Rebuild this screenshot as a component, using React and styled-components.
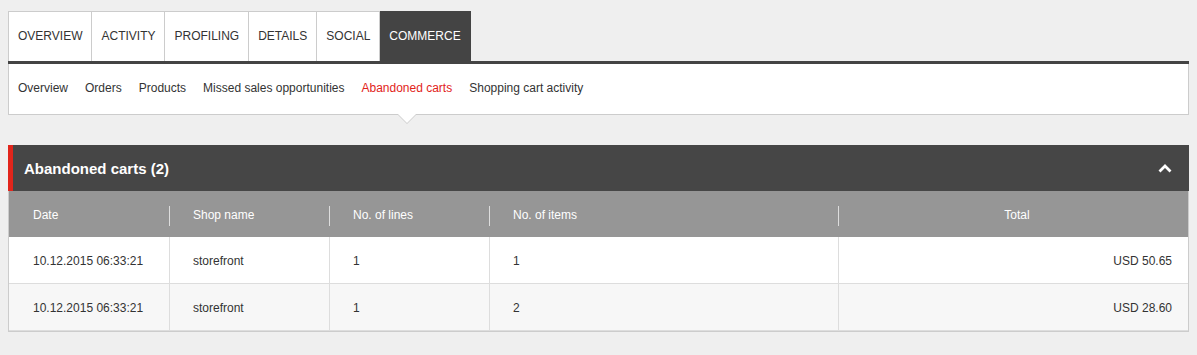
import React from "react";
import styled, { createGlobalStyle } from "styled-components";

const Global = createGlobalStyle`
  html, body { margin: 0; padding: 0; background: #efefef; }
  body { font-family: "Liberation Sans", Arial, sans-serif; font-size: 12px; color: #333; }
  * { box-sizing: border-box; }
`;

const Page = styled.div`
  padding: 11px 8px;
`;

const TabBar = styled.div`
  display: flex;
  border-bottom: 3px solid #444;
`;

const Tab = styled.div`
  height: 50px;
  display: flex;
  align-items: center;
  padding: 0 9px 1px;
  font-size: 12px;
  text-transform: uppercase;
  background: ${(p) => (p.$active ? "#444" : "#fff")};
  color: ${(p) => (p.$active ? "#fff" : "#333")};
  border-top: 1px solid ${(p) => (p.$active ? "#444" : "#ccc")};
  border-right: 1px solid ${(p) => (p.$active ? "#444" : "#ccc")};
  &:first-child { border-left: 1px solid #ccc; }
`;

const SubNav = styled.div`
  display: flex;
  gap: 17px;
  height: 51px;
  padding: 0 9px;
  background: #fff;
  border: 1px solid #ccc;
  border-top: none;
`;

const SubItem = styled.div`
  position: relative;
  display: flex;
  align-items: center;
  height: 50px;
  padding-bottom: 2px;
  font-size: 12px;
  color: ${(p) => (p.$active ? "#e2231a" : "#333")};
  ${(p) =>
    p.$active &&
    `
    &::before, &::after {
      content: "";
      position: absolute;
      left: 50%;
      top: 100%;
      width: 0;
      height: 0;
      border-style: solid;
      border-color: transparent;
    }
    &::before {
      margin-left: -10px;
      border-width: 10px 10px 0 10px;
      border-top-color: #ccc;
    }
    &::after {
      margin-left: -9px;
      border-width: 9px 9px 0 9px;
      border-top-color: #fff;
    }
  `}
`;

const Panel = styled.section`
  margin-top: 30px;
`;

const PanelHeader = styled.div`
  display: flex;
  align-items: center;
  justify-content: space-between;
  height: 46px;
  background: #464646;
  border-left: 5px solid #e1251b;
  padding: 0 17px 0 11px;
`;

const Title = styled.h2`
  margin: 0;
  font-size: 15px;
  font-weight: bold;
  color: #fff;
`;

const Chevron = () => (
  <svg width="14" height="9" viewBox="0 0 14 9">
    <polyline points="1.5,7.5 7,2 12.5,7.5" fill="none" stroke="#fff" strokeWidth="2.8" />
  </svg>
);

const TableWrap = styled.div`
  border: 1px solid #ccc;
  border-top: none;
`;

const Row = styled.div`
  display: grid;
  grid-template-columns: 161px 160px 160px 349px 1fr;
  height: ${(p) => (p.$head ? "46px" : "47px")};
  background: ${(p) => (p.$head ? "#969696" : p.$alt ? "#f7f7f7" : "#fff")};
  border-bottom: ${(p) => (p.$head ? "none" : "1px solid #ddd")};
`;

const HeadCell = styled.div`
  position: relative;
  display: flex;
  align-items: center;
  justify-content: ${(p) => (p.$center ? "center" : "flex-start")};
  padding: ${(p) => (p.$center ? "1px 16px 0 23px" : "1px 0 0 23px")};
  color: #fff;
  font-size: 12px;
  &:first-child { padding-left: 24px; }
  &:not(:last-child)::after {
    content: "";
    position: absolute;
    right: 0;
    top: 15px;
    bottom: 11px;
    width: 1px;
    background: #ddd;
  }
`;

const Cell = styled.div`
  display: flex;
  align-items: center;
  justify-content: ${(p) => (p.$right ? "flex-end" : "flex-start")};
  padding: ${(p) => (p.$right ? "1px 16px 0 0" : "1px 0 0 23px")};
  font-size: 12px;
  color: #333;
  &:first-child { padding-left: 24px; }
  &:not(:last-child) { border-right: 1px solid #ddd; }
`;

const tabs = ["Overview", "Activity", "Profiling", "Details", "Social", "Commerce"];
const subs = ["Overview", "Orders", "Products", "Missed sales opportunities", "Abandoned carts", "Shopping cart activity"];
const rows = [
  { date: "10.12.2015 06:33:21", shop: "storefront", lines: "1", items: "1", total: "USD 50.65" },
  { date: "10.12.2015 06:33:21", shop: "storefront", lines: "1", items: "2", total: "USD 28.60" },
];

export default function App() {
  return (
    <>
      <Global />
      <Page>
        <TabBar>
          {tabs.map((t) => (
            <Tab key={t} $active={t === "Commerce"}>{t}</Tab>
          ))}
        </TabBar>
        <SubNav>
          {subs.map((s) => (
            <SubItem key={s} $active={s === "Abandoned carts"}>{s}</SubItem>
          ))}
        </SubNav>
        <Panel>
          <PanelHeader>
            <Title>Abandoned carts (2)</Title>
            <Chevron />
          </PanelHeader>
          <TableWrap>
            <Row $head>
              <HeadCell>Date</HeadCell>
              <HeadCell>Shop name</HeadCell>
              <HeadCell>No. of lines</HeadCell>
              <HeadCell>No. of items</HeadCell>
              <HeadCell $center>Total</HeadCell>
            </Row>
            {rows.map((r, i) => (
              <Row key={i} $alt={i % 2 === 1}>
                <Cell>{r.date}</Cell>
                <Cell>{r.shop}</Cell>
                <Cell>{r.lines}</Cell>
                <Cell>{r.items}</Cell>
                <Cell $right>{r.total}</Cell>
              </Row>
            ))}
          </TableWrap>
        </Panel>
      </Page>
    </>
  );
}
